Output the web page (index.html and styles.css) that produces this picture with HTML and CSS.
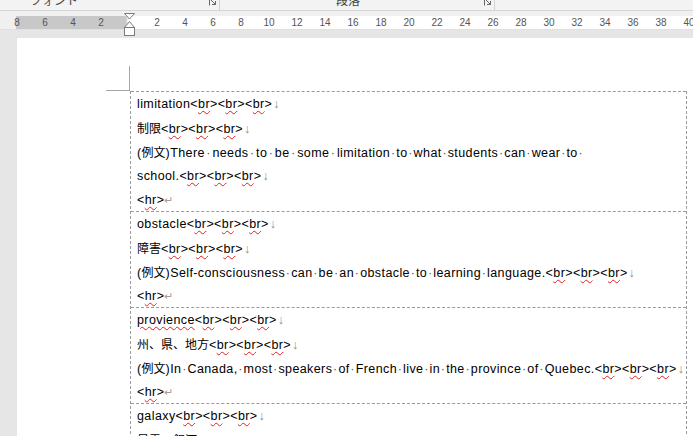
FILE: index.html
```html
<!DOCTYPE html>
<html lang="ja">
<head>
<meta charset="utf-8">
<title>Word</title>
<link rel="stylesheet" href="styles.css">
</head>
<body>
<div class="app">
  <div class="ribbon">
    <div class="grp g1">
      <span class="glabel">フォント</span>
      <span class="launch"><svg width="10" height="10" viewBox="0 0 10 10"><path d="M1.5 0.5V8.5M3 3L7.5 7.5M7.5 4V7.5H4" fill="none" stroke="#666" stroke-width="1"/></svg></span>
    </div>
    <div class="grp g2">
      <span class="glabel">段落</span>
      <span class="launch"><svg width="10" height="10" viewBox="0 0 10 10"><path d="M1.5 0.5V8.5M3 3L7.5 7.5M7.5 4V7.5H4" fill="none" stroke="#666" stroke-width="1"/></svg></span>
    </div>
  </div>
  <div class="rulerbar">
    <div class="ruler">
      <span class="rn">8</span><span class="rn">6</span><span class="rn">4</span><span class="rn">2</span><span class="rn"></span>
      <span class="rn">2</span><span class="rn">4</span><span class="rn">6</span><span class="rn">8</span><span class="rn">10</span>
      <span class="rn">12</span><span class="rn">14</span><span class="rn">16</span><span class="rn">18</span><span class="rn">20</span>
      <span class="rn">22</span><span class="rn">24</span><span class="rn">26</span><span class="rn">28</span><span class="rn">30</span>
      <span class="rn">32</span><span class="rn">34</span><span class="rn">36</span><span class="rn">38</span><span class="rn">40</span>
      <svg class="indent" width="11" height="23" viewBox="0 0 11 23"><path d="M0.5 0.5H10.5L5.5 6Z M5.5 8.5L10.5 14.5H0.5Z" fill="#fff" stroke="#7a7a7a"/><rect x="0.5" y="14.5" width="10" height="8" fill="#fff" stroke="#7a7a7a"/></svg>
    </div>
  </div>
  <div class="canvas">
    <div class="page">
      <div class="pagebody">
        <div class="crop"></div>
        <div class="doc">
          <div class="row r5">
            <div class="ln">limitation&lt;<u>br</u>&gt;&lt;<u>br</u>&gt;&lt;<u>br</u>&gt;<span class="ar">↓</span></div>
            <div class="ln"><span class="jp">制限</span>&lt;<u>br</u>&gt;&lt;<u>br</u>&gt;&lt;<u>br</u>&gt;<span class="ar">↓</span></div>
            <div class="ln">(<span class="jp">例文</span>)There<i class="d w">·</i>needs<i class="d w">·</i>to<i class="d w">·</i>be<i class="d w">·</i>some<i class="d w">·</i>limitation<i class="d">·</i>to<i class="d">·</i>what<i class="d">·</i>students<i class="d">·</i>can<i class="d">·</i>wear<i class="d">·</i>to<i class="d">·</i></div>
            <div class="ln">school.&lt;<u>br</u>&gt;&lt;<u>br</u>&gt;&lt;<u>br</u>&gt;<span class="ar">↓</span></div>
            <div class="ln">&lt;<u>hr</u>&gt;<span class="rt">↵</span></div>
          </div>
          <div class="row r4">
            <div class="ln">obstacle&lt;<u>br</u>&gt;&lt;<u>br</u>&gt;&lt;<u>br</u>&gt;<span class="ar">↓</span></div>
            <div class="ln"><span class="jp">障害</span>&lt;<u>br</u>&gt;&lt;<u>br</u>&gt;&lt;<u>br</u>&gt;<span class="ar">↓</span></div>
            <div class="ln">(<span class="jp">例文</span>)Self-consciousness<i class="d">·</i>can<i class="d">·</i>be<i class="d">·</i>an<i class="d">·</i>obstacle<i class="d">·</i>to<i class="d">·</i>learning<i class="d">·</i>language.&lt;<u>br</u>&gt;&lt;<u>br</u>&gt;&lt;<u>br</u>&gt;<span class="ar">↓</span></div>
            <div class="ln">&lt;<u>hr</u>&gt;<span class="rt">↵</span></div>
          </div>
          <div class="row r4">
            <div class="ln"><u>provience</u>&lt;<u>br</u>&gt;&lt;<u>br</u>&gt;&lt;<u>br</u>&gt;<span class="ar">↓</span></div>
            <div class="ln"><span class="jp">州、県、地方</span>&lt;<u>br</u>&gt;&lt;<u>br</u>&gt;&lt;<u>br</u>&gt;<span class="ar">↓</span></div>
            <div class="ln">(<span class="jp">例文</span>)In<i class="d">·</i>Canada,<i class="d">·</i>most<i class="d">·</i>speakers<i class="d">·</i>of<i class="d">·</i>French<i class="d">·</i>live<i class="d">·</i>in<i class="d">·</i>the<i class="d">·</i>province<i class="d">·</i>of<i class="d">·</i>Quebec.&lt;<u>br</u>&gt;&lt;<u>br</u>&gt;&lt;<u>br</u>&gt;<span class="ar">↓</span></div>
            <div class="ln">&lt;<u>hr</u>&gt;<span class="rt">↵</span></div>
          </div>
          <div class="row r4">
            <div class="ln">galaxy&lt;<u>br</u>&gt;&lt;<u>br</u>&gt;&lt;<u>br</u>&gt;<span class="ar">↓</span></div>
            <div class="ln"><span class="jp">星雲、銀河</span>&lt;<u>br</u>&gt;&lt;<u>br</u>&gt;&lt;<u>br</u>&gt;<span class="ar">↓</span></div>
          </div>
        </div>
      </div>
    </div>
  </div>
</div>
</body>
</html>
```
FILE: styles.css
```css
html, body {
  margin: 0;
  padding: 0;
}
body {
  width: 693px;
  height: 436px;
  overflow: hidden;
  background: #e6e6e6;
  font-family: "Liberation Sans", "Noto Sans CJK JP", sans-serif;
}
.app {
  width: 693px;
  height: 436px;
  overflow: hidden;
}
.ribbon {
  height: 10px;
  background: #f3f3f3;
  border-bottom: 1px solid #d6d6d6;
  display: flex;
  overflow: hidden;
}
.grp {
  display: flex;
  align-items: flex-start;
  box-sizing: border-box;
  border-right: 1px solid #d2d2d2;
  height: 10px;
  padding-right: 1px;
}
.g1 {
  width: 220px;
  padding-left: 30px;
}
.g2 {
  width: 275px;
  padding-left: 116px;
}
.glabel {
  font: 12px/12px "Noto Sans CJK JP", sans-serif;
  color: #444;
  margin-top: -6px;
}
.launch {
  margin-left: auto;
  display: flex;
  margin-top: -3px;
}
.rulerbar {
  background: #f0f0f0;
  padding-top: 5px;
}
.ruler {
  position: relative;
  height: 13px;
  margin-left: 3px;
  display: flex;
  overflow: visible;
  background:
    linear-gradient(to right, #f0f0f0 0 13px, #c8c8c8 13px 123px, #e4e4e4 124px, #fff 126px);
}
.rn {
  flex: none;
  width: 28px;
  text-align: center;
  font: 10px/13px "Liberation Sans", sans-serif;
  color: #555;
}
.indent {
  position: absolute;
  left: 121px;
  top: -3px;
}
.canvas {
  padding: 8px 0 0 17px;
  border-top: 1px solid #e0e0e0;
}
.page {
  background: #fff;
  height: 420px;
}
.pagebody {
  padding: 28px 0 0 89px;
}
.crop {
  width: 23px;
  height: 24px;
  border-right: 1px solid #a6a6a6;
  border-bottom: 1px solid #a6a6a6;
}
.doc {
  margin-left: 24px;
  width: 557px;
  box-sizing: border-box;
  border-left: 1px dashed #9a9a9a;
  border-right: 1px dashed #9a9a9a;
}
.row {
  box-sizing: border-box;
  border-top: 1px dashed #9a9a9a;
  padding-left: 6px;
}
.r5 { height: 120px; }
.r4 { height: 96px; }
.ln {
  height: 24px;
  line-height: 24px;
  font-size: 12.5px;
  letter-spacing: 0.4px;
  white-space: nowrap;
  color: #000;
}
.jp {
  font-family: "Noto Sans CJK JP", sans-serif;
  font-size: 12px;
  letter-spacing: 0;
}
u {
  text-decoration: underline wavy #e02020;
  text-decoration-thickness: 1px;
  text-underline-offset: 2px;
}
.d {
  font-style: normal;
  color: #555;
  padding: 0 0.75px;
}
.w {
  padding: 0 1.5px;
}
.ar {
  color: #909090;
  margin-left: 1px;
}
.rt {
  font-family: "DejaVu Sans", sans-serif;
  font-size: 11px;
  color: #a0a0a0;
}
```
